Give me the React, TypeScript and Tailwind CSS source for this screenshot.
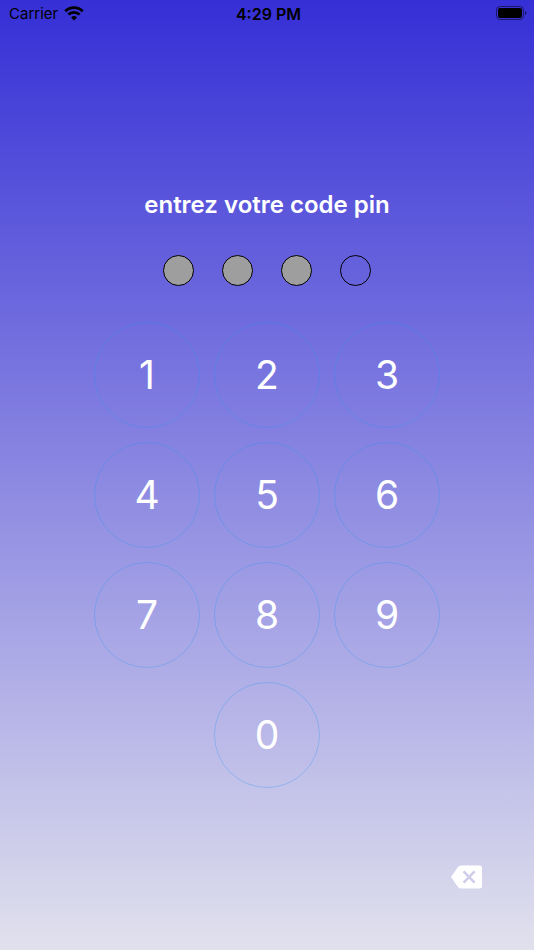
import { useState } from "react";

const keys = ["1", "2", "3", "4", "5", "6", "7", "8", "9", "0"];

function StatusBar() {
  return (
    <header className="grid h-7 grid-cols-3 items-center pr-[6px] pl-[9px] text-base text-black">
      <div className="flex items-center gap-[6px]">
        <span className="text-[15px]">Carrier</span>
        <svg viewBox="0 0 20 16" className="h-4 w-5" fill="none" stroke="currentColor" strokeWidth="2.8">
          <path d="M1.3 5.2a12.4 12.4 0 0 1 17.4 0" />
          <path d="M4.4 8.6a8 8 0 0 1 11.2 0" />
          <path d="M10 14.4l-3-3a4.3 4.3 0 0 1 6 0z" fill="currentColor" stroke="none" />
        </svg>
      </div>
      <span className="text-center font-semibold">4:29 PM</span>
      <svg viewBox="0 0 32 16" className="h-4 w-8 justify-self-end">
        <rect x="0.5" y="0.5" width="27" height="13" rx="3.5" fill="none" stroke="currentColor" opacity="0.5" />
        <rect x="2" y="2" width="24" height="10" rx="2" fill="currentColor" />
        <path d="M29 5v4c2-.6 2-3.4 0-4z" fill="currentColor" opacity="0.5" />
      </svg>
    </header>
  );
}

export default function App() {
  const [pin, setPin] = useState("429");

  const handlePress = (key: string) => {
    if (pin.length < 4) setPin(pin + key);
  };

  return (
    <div className="flex min-h-screen flex-col bg-linear-to-b/srgb from-[#352fd6] to-[#e1e1ed] font-['Inter',sans-serif] text-white">
      <StatusBar />
      <main className="flex flex-1 flex-col items-center pt-[161px]">
        <h1 className="text-2xl font-semibold">entrez votre code pin</h1>

        {/* Entered digits */}
        <div className="mt-[34px] flex gap-7">
          {[0, 1, 2, 3].map((i) => (
            <span
              key={i}
              className={`size-[31px] rounded-full border border-black ${i < pin.length ? "bg-[#9e9e9e]" : ""}`}
            />
          ))}
        </div>

        {/* Keypad */}
        <div className="mt-9 grid grid-cols-3 gap-[14px]">
          {keys.map((key) => (
            <button
              key={key}
              type="button"
              onClick={() => handlePress(key)}
              className="size-[106px] rounded-full border border-[#2196f3]/30 text-[39px] last:col-start-2"
            >
              {key}
            </button>
          ))}
        </div>

        <button
          type="button"
          aria-label="Effacer"
          onClick={() => setPin(pin.slice(0, -1))}
          className="mt-auto mr-[52px] mb-[61px] self-end"
        >
          <svg viewBox="0 0 32 24" className="h-6 w-8">
            <path d="M11 0.5h18.5q2.5 0 2.5 2.5v18q0 2.5-2.5 2.5H11q-2 0-3.2-1.8L1 12l6.8-9.7q1.2-1.8 3.2-1.8z" fill="white" />
            <path d="M13.6 6.4l11 11.2M24.6 6.4l-11 11.2" stroke="#cfceea" strokeWidth="2.6" />
          </svg>
        </button>
      </main>
    </div>
  );
}
